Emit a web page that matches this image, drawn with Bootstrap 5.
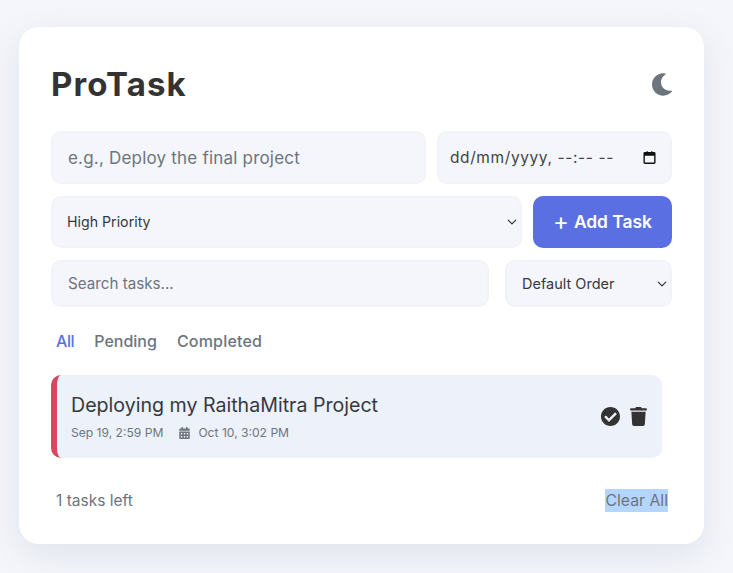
<!DOCTYPE html>
<html lang="en">
<head>
<meta charset="utf-8">
<title>ProTask</title>
<link href="https://cdn.jsdelivr.net/npm/bootstrap@5.3.0/dist/css/bootstrap.min.css" rel="stylesheet">
<style>
html,body{height:100%}
body{background:#f4f6fb;font-family:Inter,"Liberation Sans",sans-serif;color:#343a40;overflow:hidden}
.pt-shell{width:685px;height:517px;margin:27px 0 0 19px;background:#fff;border-radius:20px;padding:32px;box-shadow:0 10px 35px rgba(80,90,120,.12)}
.pt-head{height:50px;margin-bottom:22px}
.pt-title{font-size:33px;font-weight:700;color:#333;margin:0;line-height:50px;letter-spacing:1.1px}
.pt-moon{width:20px;height:23px;fill:#6c757d;display:block}
.pt-row{margin-bottom:12px}
.pt-field{background-color:#f5f6fb;border:2px solid #f1f3f9;border-radius:10px;color:#343a40;box-shadow:none}
.pt-field::placeholder{color:#6c757d;opacity:1}
select.pt-field{background-position:right 2px center;background-size:12px 10px}
.pt-main{height:53px;width:375px;padding:0 15px;font-size:17px;letter-spacing:.2px}
.pt-date{height:53px;width:235px;padding:0 14px 0 11px;font-size:15.5px;color:#3f4449;letter-spacing:.6px}
.pt-date svg{width:13px;height:13px}
.pt-prio{width:471px;height:52px;padding-left:14px;font-size:14.2px}
.pt-add{width:139px;height:52px;background:#5a6fe2;border:0;border-radius:10px;color:#fff;font-size:17.4px;font-weight:600;padding:0;gap:5px}
.pt-add:hover{background:#5a6fe2;color:#fff}
.pt-plus{font-size:24px;font-weight:400;line-height:24px}
.pt-search{width:438px;height:47px;padding:0 15px;font-size:15.2px}
.pt-sort{width:167px;height:47px;padding-left:15px;font-size:14.5px}
.pt-tabs{margin:22px 0;height:24px;padding-left:5px;gap:20px}
.pt-tab{font-size:16px;font-weight:500;color:#6c757d;line-height:24px;padding:0;text-decoration:none}
.pt-tab.pt-on{color:#5a6fe2;letter-spacing:-.4px}
.pt-tab.pt-wide{letter-spacing:.2px}
.pt-item{width:611px;height:83px;background:#edf1f9;border-left:6px solid #d9475f;border-radius:10px;padding:0 15px 0 14px}
.pt-name{font-size:19.6px;font-weight:400;color:#343a40;line-height:28px;margin:0 0 4px}
.pt-meta{font-size:12.1px;color:#6c757d;line-height:20px}
.pt-cal{width:11px;height:12px;fill:#6c757d;margin:0 8px 0 16px}
.pt-check{width:19px;height:19px;fill:#333}
.pt-bin{width:17px;height:19px;fill:#333;margin-left:10px}
.pt-foot{margin-top:31px;padding:0 4px 0 5px;font-size:15.5px;color:#6c757d;line-height:23px}
.pt-clear{background:#b4d5fe;color:#6c757d;padding:0;border:0;font:inherit;font-size:15.8px}
</style>
</head>
<body>
<main class="pt-shell">
  <header class="pt-head d-flex justify-content-between align-items-center">
    <h1 class="pt-title">ProTask</h1>
    <svg class="pt-moon" viewBox="27 0 457 512" aria-hidden="true"><path d="M283.211 512c78.962 0 151.079-35.925 198.857-94.792 7.068-8.708-.639-21.43-11.562-19.35-124.203 23.654-238.262-71.576-238.262-196.954 0-72.222 38.662-138.635 101.498-174.394 9.686-5.512 7.25-20.197-3.756-22.23A258.156 258.156 0 0 0 283.211 0c-141.309 0-256 114.511-256 256 0 141.309 114.511 256 256 256z"/></svg>
  </header>
  <div class="d-flex justify-content-between pt-row">
    <input class="form-control pt-field pt-main" placeholder="e.g., Deploy the final project">
    <div class="pt-field pt-date d-flex align-items-center justify-content-between">
      <span>dd/mm/yyyy, --:-- --</span>
      <svg viewBox="0 0 14 14" aria-hidden="true"><path fill="#111" d="M2 1h2V0h1v1h4V0h1v1h2a1.5 1.5 0 0 1 1.5 1.5v10A1.5 1.5 0 0 1 12 14H2a1.5 1.5 0 0 1-1.5-1.5v-10A1.5 1.5 0 0 1 2 1zm0 4v7.5h10V5z"/></svg>
    </div>
  </div>
  <div class="d-flex justify-content-between pt-row">
    <select class="form-select pt-field pt-prio"><option>High Priority</option></select>
    <button class="btn pt-add d-flex align-items-center justify-content-center" type="button"><span class="pt-plus">+</span><span>Add Task</span></button>
  </div>
  <div class="d-flex justify-content-between">
    <input class="form-control pt-field pt-search" placeholder="Search tasks...">
    <select class="form-select pt-field pt-sort"><option>Default Order</option></select>
  </div>
  <nav class="d-flex pt-tabs">
    <a class="pt-tab pt-on" href="#">All</a>
    <a class="pt-tab" href="#">Pending</a>
    <a class="pt-tab pt-wide" href="#">Completed</a>
  </nav>
  <div class="pt-item d-flex justify-content-between align-items-center">
    <div>
      <p class="pt-name">Deploying my RaithaMitra Project</p>
      <div class="pt-meta d-flex align-items-center">
        <span>Sep 19, 2:59 PM</span>
        <svg class="pt-cal" viewBox="0 0 448 512" aria-hidden="true"><path d="M0 464c0 26.5 21.5 48 48 48h352c26.5 0 48-21.5 48-48V192H0v272zm320-196c0-6.6 5.4-12 12-12h40c6.6 0 12 5.4 12 12v40c0 6.6-5.4 12-12 12h-40c-6.6 0-12-5.4-12-12v-40zm0 128c0-6.6 5.4-12 12-12h40c6.6 0 12 5.4 12 12v40c0 6.6-5.4 12-12 12h-40c-6.6 0-12-5.4-12-12v-40zM192 268c0-6.6 5.4-12 12-12h40c6.6 0 12 5.4 12 12v40c0 6.6-5.4 12-12 12h-40c-6.6 0-12-5.4-12-12v-40zm0 128c0-6.6 5.4-12 12-12h40c6.6 0 12 5.4 12 12v40c0 6.6-5.4 12-12 12h-40c-6.6 0-12-5.4-12-12v-40zM64 268c0-6.6 5.4-12 12-12h40c6.6 0 12 5.4 12 12v40c0 6.6-5.4 12-12 12H76c-6.6 0-12-5.4-12-12v-40zm0 128c0-6.6 5.4-12 12-12h40c6.6 0 12 5.4 12 12v40c0 6.6-5.4 12-12 12H76c-6.6 0-12-5.4-12-12v-40zM400 64h-48V16c0-8.8-7.2-16-16-16h-32c-8.8 0-16 7.2-16 16v48H160V16c0-8.8-7.2-16-16-16h-32c-8.8 0-16 7.2-16 16v48H48C21.5 64 0 85.5 0 112v48h448v-48c0-26.5-21.5-48-48-48z"/></svg>
        <span>Oct 10, 3:02 PM</span>
      </div>
    </div>
    <div class="d-flex align-items-center">
      <svg class="pt-check" viewBox="8 8 496 496" aria-hidden="true"><path d="M504 256c0 136.967-111.033 248-248 248S8 392.967 8 256 119.033 8 256 8s248 111.033 248 248zM227.314 387.314l184-184c6.248-6.248 6.248-16.379 0-22.627l-22.627-22.627c-6.248-6.249-16.379-6.249-22.628 0L216 308.118l-70.059-70.059c-6.248-6.248-16.379-6.248-22.628 0l-22.627 22.627c-6.248 6.248-6.248 16.379 0 22.627l104 104c6.249 6.249 16.379 6.249 22.628.001z"/></svg>
      <svg class="pt-bin" viewBox="0 0 448 512" aria-hidden="true"><path d="M432 32H312l-9.4-18.7A24 24 0 0 0 281.1 0H166.8a23.72 23.72 0 0 0-21.4 13.3L136 32H16A16 16 0 0 0 0 48v32a16 16 0 0 0 16 16h416a16 16 0 0 0 16-16V48a16 16 0 0 0-16-16zM53.2 467a48 48 0 0 0 47.9 45h245.8a48 48 0 0 0 47.9-45L416 128H32z"/></svg>
    </div>
  </div>
  <footer class="pt-foot d-flex justify-content-between">
    <span>1 tasks left</span>
    <button class="pt-clear" type="button">Clear All</button>
  </footer>
</main>
<script src="https://cdn.jsdelivr.net/npm/bootstrap@5.3.0/dist/js/bootstrap.bundle.min.js"></script>
</body>
</html>
